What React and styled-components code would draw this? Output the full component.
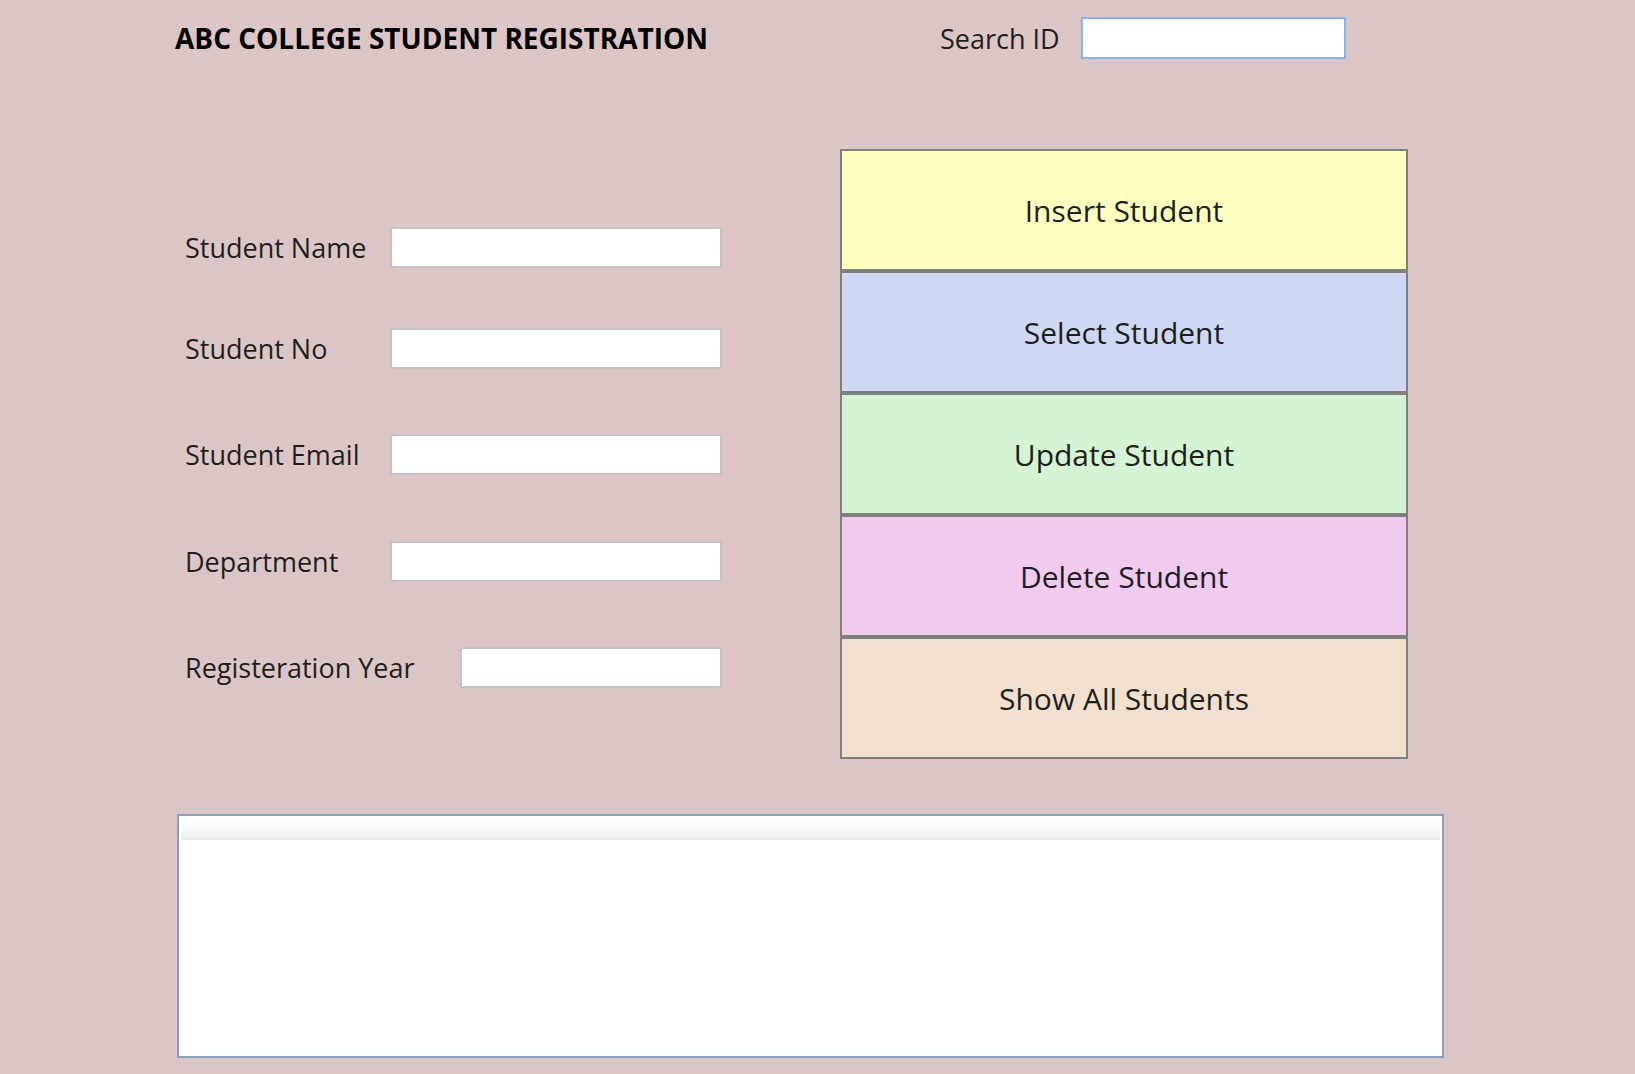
import styled, { createGlobalStyle } from "styled-components";

const GlobalStyle = createGlobalStyle`
body {
  margin: 0;
  background: #dcc5c5;
  font-family: "Open Sans", "Noto Sans", sans-serif;
}
`
const Page = styled.div`
width: 1635px;
height: 1074px;
padding-left: 175px;
box-sizing: border-box;
overflow: hidden;
`
const Header = styled.div`
display: flex;
align-items: center;
height: 76px;
`
const Title = styled.div`
flex: 0 0 765px;
font-size: 28px;
font-weight: bold;
color: #000;
`
const Label = styled.div`
font-size: 27px;
color: #1e1e1e;
width: ${props => props.width || 'auto'};
flex-shrink: 0;
`
const SearchLabel = styled(Label)`
margin-right: 21px;
`
const SearchBox = styled.input`
width: 265px;
height: 42px;
box-sizing: border-box;
border: 2px solid #86b3e8;
background: #fff;
outline: none;
`
const Main = styled.div`
display: flex;
margin-top: 73px;
`
const Form = styled.div`
flex: 0 0 665px;
box-sizing: border-box;
padding: 78px 0 0 10px;
display: flex;
flex-direction: column;
`
const Row = styled.div`
display: flex;
align-items: center;
height: 41px;
margin-top: ${props => props.top}px;
`
const Field = styled.input`
width: ${props => props.width}px;
height: 41px;
box-sizing: border-box;
border: 2px solid #c8c0c4;
background: #fff;
outline: none;
`
const Buttons = styled.div`
width: 568px;
display: flex;
flex-direction: column;
`
const Button = styled.button`
height: 122px;
border: 2px solid #7f7f7f;
background: ${props => props.bg};
font-family: "Open Sans", "Noto Sans", sans-serif;
font-size: 30px;
color: #1e1e1e;
padding: 0;
cursor: pointer;
`
const Grid = styled.div`
margin-top: 55px;
margin-left: 2px;
width: 1267px;
height: 244px;
box-sizing: border-box;
border: 2px solid #8c9fbd;
background: #fff;
`
const GridHeader = styled.div`
height: 20px;
margin: 2px 2px 0;
background: linear-gradient(#ffffff, #f0f1f4);
border-bottom: 2px solid #eaebee;
`

const fields = [
    { label: 'Student Name', labelWidth: '205px', width: 332, top: 0 },
    { label: 'Student No', labelWidth: '205px', width: 332, top: 60 },
    { label: 'Student Email', labelWidth: '205px', width: 332, top: 65 },
    { label: 'Department', labelWidth: '205px', width: 332, top: 66 },
    { label: 'Registeration Year', labelWidth: '275px', width: 262, top: 65 },
]

const actions = [
    { text: 'Insert Student', bg: '#ffffc0' },
    { text: 'Select Student', bg: '#cfd8f3' },
    { text: 'Update Student', bg: '#d4f4d4' },
    { text: 'Delete Student', bg: '#f0cbef' },
    { text: 'Show All Students', bg: '#f2dfcd' },
]

const App = () => {
    return (
        <>
            <GlobalStyle />
            <Page>
                <Header>
                    <Title>ABC COLLEGE STUDENT REGISTRATION</Title>
                    <SearchLabel>Search ID</SearchLabel>
                    <SearchBox />
                </Header>
                <Main>
                    <Form>
                        {fields.map((item) => (
                            <Row key={item.label} top={item.top}>
                                <Label width={item.labelWidth}>{item.label}</Label>
                                <Field width={item.width} />
                            </Row>
                        ))}
                    </Form>
                    <Buttons>
                        {actions.map((item) => (
                            <Button key={item.text} bg={item.bg}>{item.text}</Button>
                        ))}
                    </Buttons>
                </Main>
                <Grid>
                    <GridHeader />
                </Grid>
            </Page>
        </>
    )
}
export default App;
